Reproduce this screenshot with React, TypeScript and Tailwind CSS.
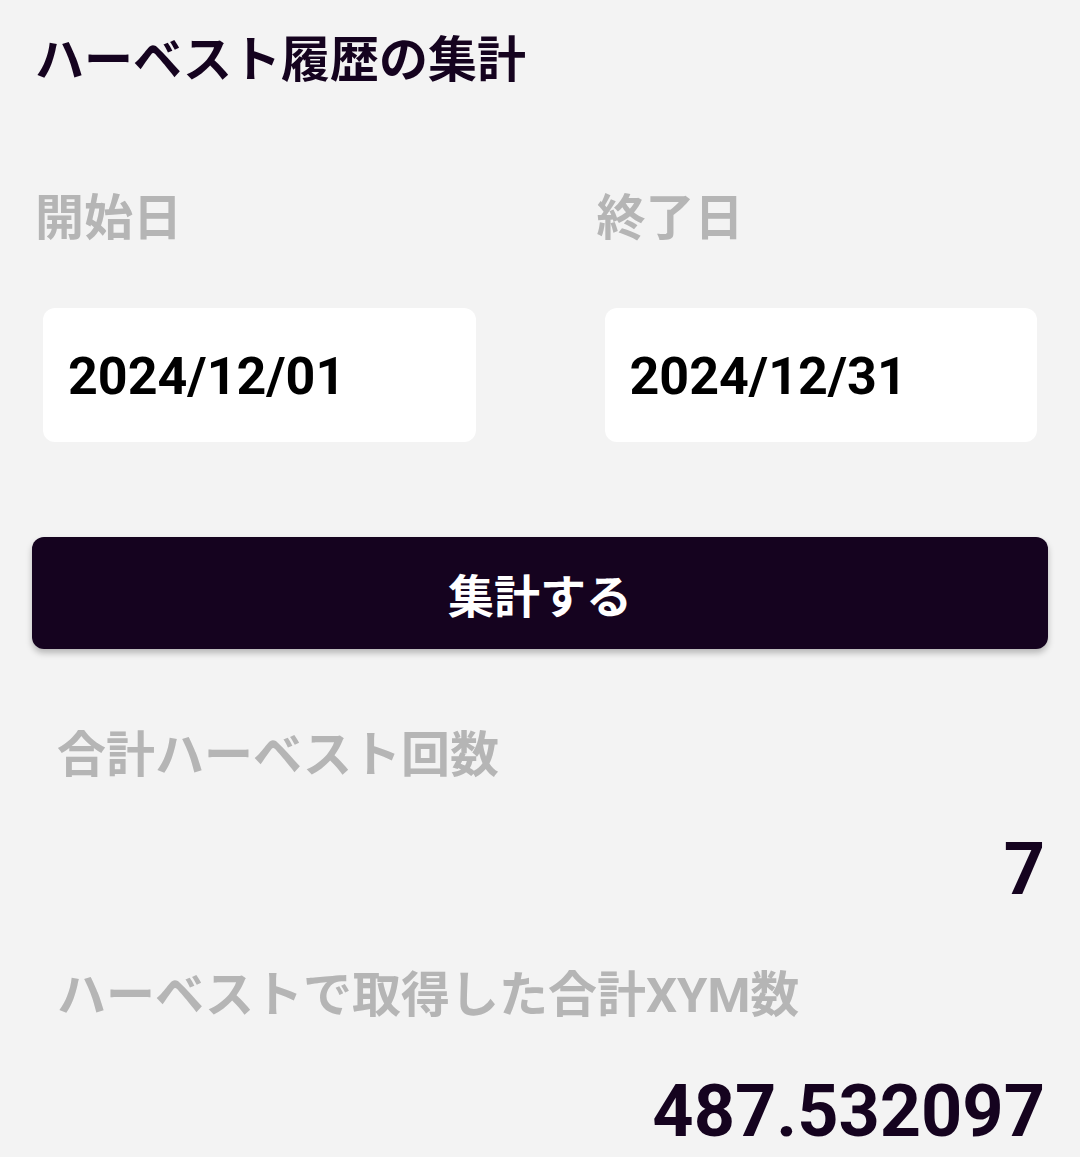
const jp = 'font-["Roboto","Noto_Sans_CJK_JP",sans-serif]';

function DateField({ label, value }: { label: string; value: string }) {
  return (
    <div className="flex flex-col">
      <div className="text-[49px] leading-none font-bold text-[#b5b5b5]">{label}</div>
      <div className="mx-[8px] mt-[65px] flex h-[134px] items-center rounded-[12px] bg-white pl-[25px] pt-[3px]">
        <span className="text-[52px] leading-none font-bold text-black">{value}</span>
      </div>
    </div>
  );
}

function Stat({ label, value, top, gap }: { label: string; value: string; top: string; gap: string }) {
  return (
    <div className={top}>
      <div className="pl-[22px] text-[49px] leading-none font-bold text-[#b5b5b5]">{label}</div>
      <div className={`${gap} text-right text-[72px] leading-none font-bold text-[#15031f]`}>{value}</div>
    </div>
  );
}

export default function App() {
  return (
    <div className={`${jp} min-h-screen bg-[#f3f3f3] px-[35px] pt-[36px]`}>
      <h1 className="text-[49px] leading-none font-bold text-[#15031f]">ハーベスト履歴の集計</h1>

      <div className="mt-[109px] grid grid-cols-2 gap-x-[113px]">
        <DateField label="開始日" value="2024/12/01" />
        <DateField label="終了日" value="2024/12/31" />
      </div>

      <button className="mx-[-3px] mt-[95px] flex h-[112px] w-[calc(100%+6px)] items-center justify-center rounded-[12px] bg-[#15031f] pt-[8px] shadow-[0_4px_6px_rgba(0,0,0,0.25)]">
        <span className="text-[46px] leading-none font-bold text-white">集計する</span>
      </button>

      <Stat top="mt-[82px]" gap="mt-[54px]" label="合計ハーベスト回数" value="7" />
      <Stat top="mt-[65px]" gap="mt-[56px]" label="ハーベストで取得した合計XYM数" value="487.532097" />
    </div>
  );
}
